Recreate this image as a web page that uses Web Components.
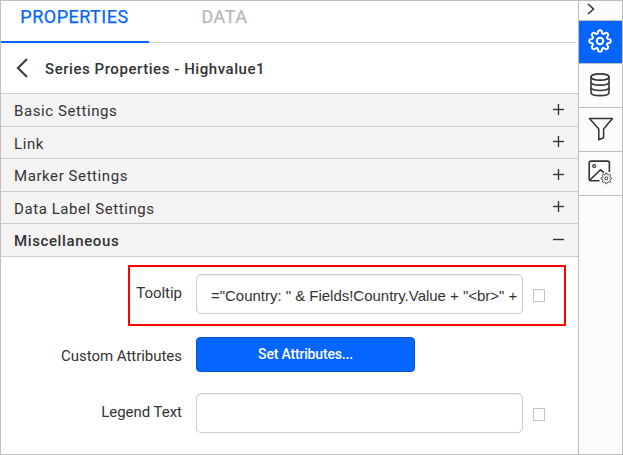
<!DOCTYPE html>
<html lang="en"><head><meta charset="utf-8"><title>Series Properties</title>
<style>body{margin:0;font-family:Roboto,"Liberation Sans",sans-serif;color:#333}</style></head>
<body><report-designer></report-designer>
<script>
const define=(name,html)=>customElements.define(name,class extends HTMLElement{
  connectedCallback(){
    if(this.shadowRoot)return;
    this.attachShadow({mode:'open'}).innerHTML='<style>*{box-sizing:border-box}svg{display:block}</style>'+html;
  }
});
define('tab-item',`<style>:host{display:block;width:151px;height:42px;padding-top:5px;text-align:center;font-size:18px;line-height:22px;letter-spacing:.5px;color:#b9b9b9;white-space:nowrap;-webkit-text-stroke:.25px currentColor}
:host([active]){width:148px;color:#0565ff;border-bottom:2px solid #0565ff;box-sizing:border-box;padding-right:1px}:host{box-sizing:border-box}</style><slot></slot>`);
define('panel-header',`<style>:host{display:flex;align-items:center;height:51px;border-bottom:1px solid #ccc;box-sizing:border-box;padding-left:15px;font-size:15px;font-weight:500;letter-spacing:.55px;white-space:nowrap;padding-top:2px}
svg{margin:-2px 17px 0 0}</style><svg width="12" height="20" viewBox="0 0 12 20" fill="none" stroke="#444" stroke-width="2.3"><path d="M11 1 2 10l9 9"/></svg><slot></slot>`);
define('accordion-row',`<style>:host{display:flex;box-sizing:border-box;align-items:center;justify-content:space-between;height:var(--h,33px);background:#f4f4f4;border-bottom:1px solid #ccc;padding:2px 14px 0 13px;font-size:15px;letter-spacing:.58px;white-space:nowrap}
:host([open]){font-weight:500;letter-spacing:.62px}:host([open]) .v{display:none}svg{margin-top:-4px}</style><slot></slot>
<svg width="11" height="11" viewBox="0 0 11 11" fill="none" stroke="#333" stroke-width="1.4"><path d="M0 5.5h11"/><path class="v" d="M5.5 0v11"/></svg>`);
define('form-row',`<style>:host{display:flex;height:40px}
.label{width:181px;margin-right:14px;text-align:right;font-size:15px;line-height:18px;padding-top:10px;letter-spacing:-.03px;white-space:nowrap}</style><div class="label"><slot name="label"></slot></div><slot></slot>`);
define('text-field',`<style>:host{display:block;box-sizing:border-box;width:327px;height:40px;border:1px solid #ccc;border-radius:5px;box-shadow:inset 0 1px 1px #00000013;padding:1px 0 0 14px;font:15px/39px "Liberation Sans",Arial,sans-serif;white-space:nowrap;letter-spacing:-.02px}</style><slot></slot>`);
define('check-box',`<style>:host{display:block;box-sizing:border-box;width:12px;height:13px;border:1px solid #c4c4c4;margin:15px 0 0 10px}</style>`);
define('action-button',`<style>:host{display:block;box-sizing:border-box;width:219px;height:35px;border:1px solid #0654d1;border-radius:4px;background:#0565ff;color:#fff;text-align:center;font-size:14px;font-weight:500;line-height:33px;letter-spacing:-.18px}</style><slot></slot>`);
define('tool-button',`<style>:host{display:flex;box-sizing:border-box;height:44px;border-bottom:1px solid #bfbfbf;padding:0 0 2px;justify-content:center;align-items:center;color:#333}:host([active]){height:43px;background:#0565ff;color:#fff;padding-right:2px}:host([small]){height:20px;padding:0 19px 3px 0}:host([last]){padding:0 2px 4px 0}:host([db]){padding-right:2px}</style><slot></slot>`);
define('tool-rail',`<style>:host{display:block;width:44px;box-sizing:border-box;border-left:1px solid #bfbfbf;background:#fcfcfc}</style>
<tool-button small><svg width="8" height="12" viewBox="0 0 8 12" fill="none" stroke="currentColor" stroke-width="1.5"><path d="m1 1 5.5 5L1 11"/></svg></tool-button>
<tool-button active><svg width="24" height="24" viewBox="0 0 24 24" fill="none" stroke="currentColor" stroke-width="2" stroke-linejoin="round"><path id="gear"/><circle cx="12" cy="12" r="3.2"/></svg></tool-button>
<tool-button db><svg width="20" height="24" viewBox="0 0 20 24" fill="none" stroke="currentColor" stroke-width="1.6"><ellipse cx="10" cy="4" rx="9" ry="3.1"/><path d="M1 4v15.5c0 4.2 18 4.2 18 0V4M1 9c0 4.2 18 4.2 18 0M1 14.3c0 4.2 18 4.2 18 0"/></svg></tool-button>
<tool-button><svg width="26" height="24" viewBox="0 0 26 24" fill="none" stroke="currentColor" stroke-width="1.5" stroke-linejoin="round"><path d="M1.5 1.5h23L15.6 12v8.7l-4.8 2V12Z"/></svg></tool-button>
<tool-button last><svg width="24" height="24" viewBox="0 0 24 24" fill="none" stroke="currentColor" stroke-width="1.6" style="overflow:visible"><path d="M11.5 20.8H3.2a2 2 0 0 1-2-2V3.1a2 2 0 0 1 2-2h16.2a2 2 0 0 1 2 2v9M2 20 12.4 9.8l3.6 2.8"/><circle cx="6.1" cy="6.1" r="1.4" stroke-width="1.2"/><g transform="translate(12.4 12.4) scale(.5)"><path id="mini" stroke-width="1.9"/><circle cx="12" cy="12" r="3" stroke-width="2"/></g></svg></tool-button>`);
define('report-designer',`<style>:host{display:grid;grid-template-columns:577px 44px;width:623px;height:455px;box-sizing:border-box;border:1px solid #bfbfbf;background:#fff;overflow:hidden}
.tabs{display:flex;height:42px;border-bottom:1px solid #ccc;width:575px}.tabs tab-item{margin-bottom:-1px}
.form{position:relative;padding-top:17px}.second{margin-top:23px}.third{margin-top:16px}
.outline{position:absolute;left:127px;top:8px;width:438px;height:61px;border:2px solid #f00}</style>
<main><div class="tabs"><tab-item active>PROPERTIES</tab-item><tab-item>DATA</tab-item></div>
<panel-header>Series Properties - Highvalue1</panel-header>
<accordion-row>Basic Settings</accordion-row><accordion-row style="--h:32px">Link</accordion-row><accordion-row>Marker Settings</accordion-row><accordion-row style="--h:32px">Data Label Settings</accordion-row><accordion-row open>Miscellaneous</accordion-row>
<div class="form"><form-row><span slot="label">Tooltip</span><text-field>="Country: " &amp; Fields!Country.Value + "&lt;br&gt;" +</text-field><check-box></check-box></form-row>
<form-row class="second"><span slot="label">Custom Attributes</span><action-button>Set Attributes...</action-button></form-row>
<form-row class="third"><span slot="label">Legend Text</span><text-field></text-field><check-box></check-box></form-row><div class="outline"></div></div></main><tool-rail></tool-rail>`);
// Eight round lobes meeting in short notches.
const root=document.querySelector('report-designer').shadowRoot.querySelector('tool-rail').shadowRoot;
let d='';
for(let i=0;i<8;i++){
  const p=(deg,r)=>{const a=(i*45+deg-90)*Math.PI/180;return (12+r*Math.cos(a)).toFixed(2)+' '+(12+r*Math.sin(a)).toFixed(2)};
  d+=(i?'L':'M')+p(-15,8.2)+'C'+p(-11,11.9)+' '+p(11,11.9)+' '+p(15,8.2)+'Q'+p(22.5,7.3)+' '+p(30,8.2);
}
root.querySelector('#gear').setAttribute('d',d+'Z');
root.querySelector('#mini').setAttribute('d',d+'Z');
</script></body></html>
